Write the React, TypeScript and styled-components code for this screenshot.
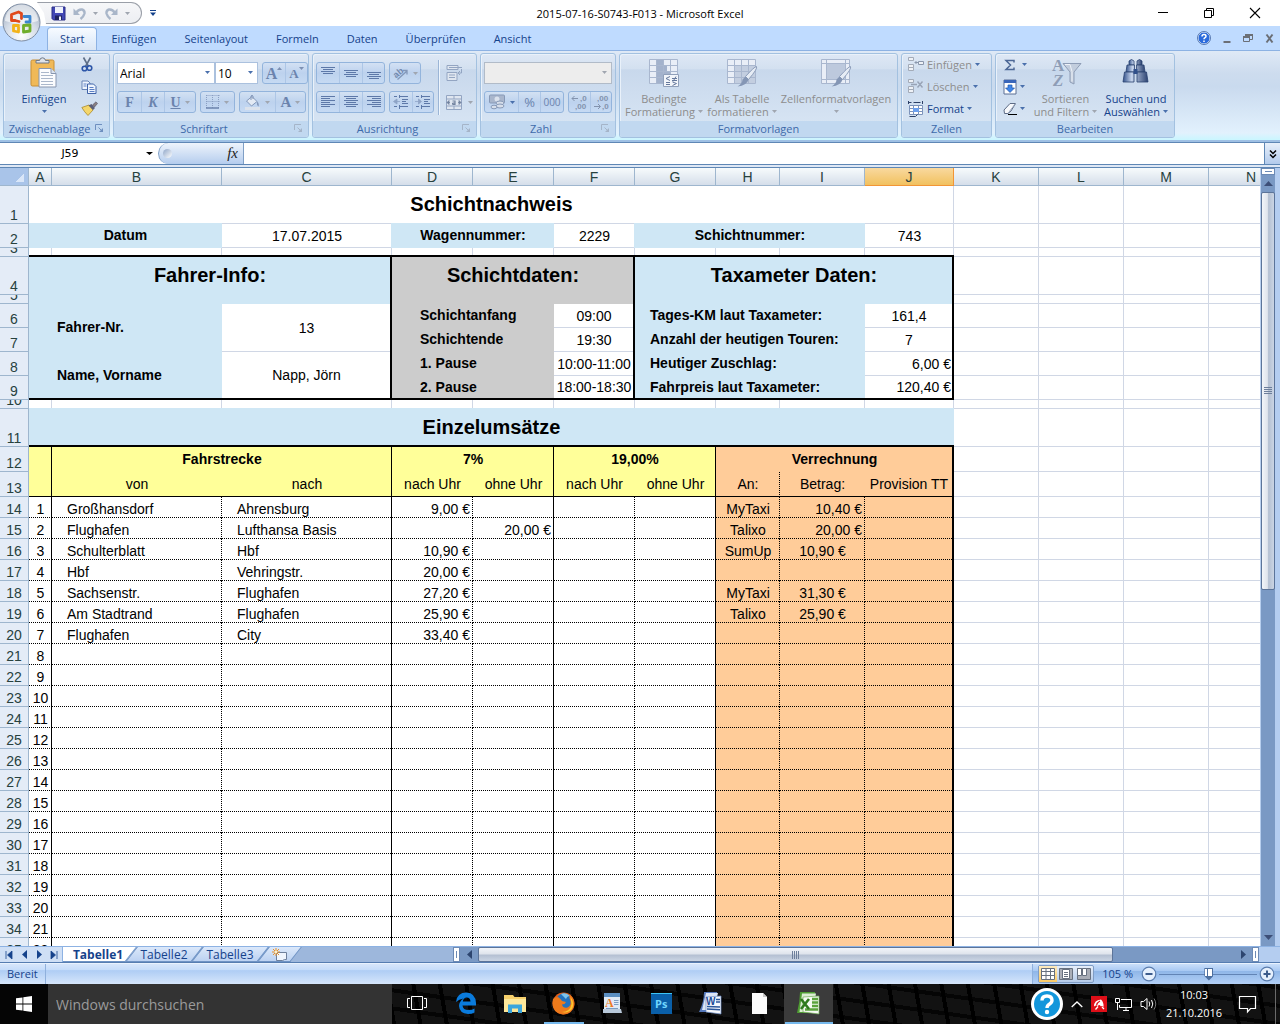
import React from "react";
import styled, { createGlobalStyle } from "styled-components";

const UI = `"Open Sans", "Noto Sans", sans-serif`;
const SHEET = `"Liberation Sans", Arial, sans-serif`;
const GRID = "#d0d7e5";
const HEAD = "#9eb6ce";
const BLUE = "#cfe7f5";
const GREY = "#cccccc";
const YELLOW = "#ffff99";
const ORANGE = "#ffcc99";
type Rule = "thick" | "thin" | "dots";

const Global = createGlobalStyle`
  *, *::before, *::after { box-sizing: border-box; }
  body { margin: 0; background: #fff; }
  button, input, select { font: inherit; color: inherit; margin: 0; padding: 0; border: 0; background: none; border-radius: 0; outline: none; }
  button { cursor: default; }
  svg { display: block; flex: none; overflow: visible; }
`;

const Page = styled.div`
  display: flex;
  flex-direction: column;
  height: 100vh;
  min-height: 480px;
  overflow: hidden;
  font-family: ${UI};
  font-size: 11px;
  line-height: 13px;
  color: #15428b;
`;

/* ---------- title bar and tabs ---------- */
const TopArea = styled.header`
  position: relative;
  flex: none;
`;
const TitleBar = styled.div`
  display: grid;
  grid-template-columns: 1fr auto 1fr;
  align-items: center;
  height: 26px;
  background: #fff;
`;
const Orb = styled.button`
  position: absolute;
  left: 2px;
  top: 3px;
`;
const QuickAccess = styled.div`
  display: flex;
  align-items: center;
  height: 26px;
  padding-left: 37px;
  gap: 8px;
`;
const QuickPill = styled.div`
  display: flex;
  align-items: center;
  gap: 7px;
  height: 22px;
  width: 105px;
  padding-left: 14px;
  border: 1px solid #9a9fa8;
  border-left: 0;
  border-radius: 0 11px 11px 0;
  background: linear-gradient(#f6f7f9, #eceef2);
  clip-path: polygon(0 0, 100% 0, 100% 100%, 9px 100%, 7px 50%);
`;
const WindowTitle = styled.div`
  font-size: 11px;
  color: #000;
`;
const WindowButtons = styled.div`
  display: flex;
  justify-content: flex-end;
  padding-right: 2px;
`;
const WindowButton = styled.button`
  display: flex;
  align-items: center;
  justify-content: center;
  width: 46px;
  height: 26px;
`;
const TabBar = styled.nav`
  display: flex;
  align-items: flex-end;
  height: 24px;
  padding: 0 6px 0 47px;
  background: #bfdbff;
`;
const RibbonTab = styled.button<{ $active?: boolean }>`
  height: 23px;
  padding: 0 ${(p) => (p.$active ? 12 : 14)}px 2px;
  border: 1px solid ${(p) => (p.$active ? "#8db2e3" : "transparent")};
  border-width: 1px ${(p) => (p.$active ? 1 : 0)}px 0;
  border-radius: 4px 4px 0 0;
  background: ${(p) => (p.$active ? "linear-gradient(#f7fbff, #e3eefb 60%, #dbe6f4)" : "none")};
`;
const TabTools = styled.div`
  display: flex;
  align-items: center;
  gap: 12px;
  height: 24px;
  margin-left: auto;
`;
const IconButton = styled.button`
  display: flex;
  align-items: center;
  justify-content: center;
`;

/* ---------- ribbon ---------- */
const Ribbon = styled.div`
  display: flex;
  gap: 3px;
  height: 92px;
  flex: none;
  padding: 2px 3px 4px;
  border-top: 1px solid #8db2e3;
  border-bottom: 2px solid #9fc0e4;
  background: linear-gradient(#dfe9f6, #cddcee 25%, #c9daee 40%, #e2f1fd 92%, #c9f6ff);
`;
const Group = styled.section<{ $w: number }>`
  display: flex;
  flex-direction: column;
  width: ${(p) => p.$w}px;
  flex: none;
  height: 85px;
  border: 1px solid #a3c1e0;
  border-radius: 3px;
  overflow: hidden;
  background: linear-gradient(#dee8f5, #d3e0f0 18%, #c8d8ec 19%, #dae7f5);
  box-shadow: inset 1px 1px 0 #e9f1fa;
`;
const GroupBody = styled.div`
  display: flex;
  flex: 1;
  padding: 0 3px;
`;
const GroupName = styled.div`
  display: flex;
  align-items: center;
  justify-content: center;
  height: 16px;
  padding-bottom: 1px;
  background: #c1d8f0;
  color: #3e6aaa;
`;
const GroupLabel = styled.span`
  flex: 1;
  text-align: center;
  white-space: nowrap;
`;
const Launcher = styled.button`
  width: 14px;
`;
const Rows = styled.div`
  display: flex;
  flex-direction: column;
  gap: 7px;
  padding-top: 8px;
`;
const Row = styled.div<{ $gap?: number }>`
  display: flex;
  gap: ${(p) => p.$gap ?? 4}px;
  height: 22px;
`;
const ButtonSet = styled.div`
  display: flex;
  border: 1px solid #93b4dc;
  border-radius: 3px;
  background: linear-gradient(#d3e1f3, #bdd2ee 50%, #c6daf3);
`;
const SetButton = styled.button<{ $w: number; $size?: number }>`
  display: flex;
  align-items: center;
  justify-content: center;
  gap: 4px;
  width: ${(p) => p.$w}px;
  color: #6b83ad;
  font-size: ${(p) => p.$size ?? 11}px;
  & + & {
    border-left: 1px solid #adc6e6;
  }
`;
const SizeMark = styled.span`
  align-self: flex-start;
  margin-left: -4px;
  padding-top: 4px;
`;
const Glyph = styled.span<{ $size: number; $italic?: boolean; $underline?: boolean }>`
  font-family: "Liberation Serif", serif;
  font-weight: bold;
  font-size: ${(p) => p.$size}px;
  font-style: ${(p) => (p.$italic ? "italic" : "normal")};
  text-decoration: ${(p) => (p.$underline ? "underline" : "none")};
`;
const Combo = styled.label<{ $w: number; $off?: boolean }>`
  position: relative;
  display: flex;
  align-items: center;
  width: ${(p) => p.$w}px;
  border: 1px solid ${(p) => (p.$off ? "#b1bbc8" : "#abc1de")};
  background: ${(p) => (p.$off ? "#ededed" : "#fff")};
  color: #000;
`;
const ComboSelect = styled.select`
  appearance: none;
  width: 100%;
  height: 100%;
  padding-left: 2px;
  font-size: 12px;
`;
const ComboArrow = styled.span`
  position: absolute;
  right: 4px;
  top: 8px;
  pointer-events: none;
`;
const Divider = styled.span`
  width: 2px;
  height: 55px;
  margin: 6px 6px 0 4px;
  border-left: 1px solid #9bb5d6;
  border-right: 1px solid #eef5fd;
`;
const PlainButton = styled.button`
  display: flex;
  align-items: center;
  gap: 6px;
  height: 22px;
`;
const BigButton = styled.button<{ $w: number; $off?: boolean }>`
  display: flex;
  flex-direction: column;
  align-items: center;
  width: ${(p) => p.$w}px;
  padding-top: 3px;
  color: ${(p) => (p.$off ? "#8d8d8d" : "#15428b")};
  white-space: nowrap;
`;
const BigCaption = styled.span`
  display: flex;
  align-items: center;
  gap: 3px;
  height: 13px;
`;
const BigIcon = styled.span`
  height: 35px;
`;
const Stack = styled.div<{ $left?: number }>`
  display: flex;
  flex-direction: column;
  padding-left: ${(p) => p.$left ?? 0}px;
`;
const SmallButton = styled.button<{ $off?: boolean }>`
  display: flex;
  align-items: center;
  gap: 3px;
  height: 22px;
  padding-bottom: 1px;
  color: ${(p) => (p.$off ? "#8d8d8d" : "#15428b")};
`;

/* ---------- formula bar ---------- */
const FormulaBar = styled.div`
  display: flex;
  flex: none;
  height: 23px;
  border-top: 1px solid #5f87b5;
  border-bottom: 1px solid #5f87b5;
  background: #fff;
  color: #000;
`;
const NameField = styled.input`
  width: 140px;
  text-align: center;
  font-family: "DejaVu Sans", sans-serif;
  font-size: 11px;
`;
const NameArrow = styled(IconButton)`
  width: 18px;
`;
const FormulaTools = styled.div`
  display: flex;
  align-items: center;
  justify-content: space-between;
  width: 86px;
  padding: 0 5px 0 4px;
  border: 1px solid #7f9fc6;
  border-width: 0 1px 0 1px;
  border-radius: 12px 0 0 12px;
  background: linear-gradient(#eef4fc, #b5cdee);
`;
const Knob = styled.span`
  width: 9px;
  height: 9px;
  border-radius: 50%;
  background: linear-gradient(135deg, #8fa6c8, #fff);
`;
const FxButton = styled.button`
  font: italic 15px "Liberation Serif", serif;
  color: #222;
`;
const FormulaField = styled.input`
  flex: 1;
  min-width: 0;
`;
const ExpandButton = styled(IconButton)`
  width: 16px;
  border-left: 1px solid #5f87b5;
  background: linear-gradient(#e8f0fb, #b3cbec);
`;
const Strip = styled.div`
  flex: none;
  height: 3px;
  background: #dfe8f5;
  border-bottom: 1px solid #5f87b5;
`;

/* ---------- sheet ---------- */
const SheetArea = styled.main`
  display: flex;
  flex: 1;
  min-height: 0;
`;
const Viewport = styled.div`
  flex: 1;
  min-width: 0;
  overflow: hidden;
  background: #fff;
`;
const Sheet = styled.table`
  width: 1294px;
  table-layout: fixed;
  border-collapse: separate;
  border-spacing: 0;
  font-family: ${SHEET};
  font-size: 14px;
  line-height: 16px;
  color: #000;
`;
const Line = styled.tr<{ $h: number }>`
  height: ${(p) => p.$h}px;
`;
const ColHead = styled.th<{ $on?: boolean }>`
  padding: 0;
  font-weight: normal;
  line-height: 16px;
  color: #27413e;
  border-right: 1px solid ${(p) => (p.$on ? "#f29536" : HEAD)};
  border-bottom: 1px solid ${(p) => (p.$on ? "#f29536" : HEAD)};
  background: ${(p) => (p.$on ? "linear-gradient(#f9d99f, #f1c15f)" : "linear-gradient(#f7fbfc, #d5deea)")};
`;
const Corner = styled.th`
  padding: 0;
  border-right: 1px solid ${HEAD};
  border-bottom: 1px solid ${HEAD};
  background: linear-gradient(135deg, transparent 50%, #d9e6f8 50%) right 4px bottom 3px / 9px 9px no-repeat #a9c4e9;
`;
const RowHead = styled.th`
  padding: 0;
  font-weight: normal;
  color: #27413e;
  vertical-align: bottom;
  border-right: 1px solid ${HEAD};
  border-bottom: 1px solid ${HEAD};
  background: #e4ecf7;
`;
const RowNumber = styled.div<{ $h: number }>`
  display: flex;
  align-items: flex-end;
  justify-content: center;
  height: ${(p) => p.$h}px;
  overflow: hidden;
`;
type CellProps = {
  $bg?: string;
  $right?: Rule;
  $bottom?: Rule;
  $align?: string;
  $v?: string;
  $indent?: number;
  $bold?: boolean;
  $title?: boolean;
  $cover?: "top" | "corner";
};
const paint = (rule: Rule | undefined, dir: string, bg?: string) =>
  rule === "dots"
    ? `repeating-linear-gradient(${dir}, #000 0 1px, transparent 1px 2px)`
    : rule
      ? "linear-gradient(#000, #000)"
      : `linear-gradient(${bg ?? GRID}, ${bg ?? GRID})`;
const weight = (rule?: Rule) => (rule === "thick" ? 2 : 1);
const cellBackground = ({ $bg, $right, $bottom }: CellProps) => {
  const right = `${paint($right, "180deg", $bg)} right top / ${weight($right)}px 100% no-repeat`;
  const bottom = `${paint($bottom, "90deg", $bg)} left bottom / 100% ${weight($bottom)}px no-repeat`;
  const rightFirst = $right === "thick" || $right === "thin";
  return `${rightFirst ? right : bottom}, ${rightFirst ? bottom : right}, ${$bg ?? "#fff"}`;
};
const Cell = styled.td<CellProps>`
  padding: 0 ${(p) => (p.$right === "thick" ? 3 : p.$align === "right" ? 3 : 2)}px
    ${(p) => weight(p.$bottom) + ((p.$bold || p.$title) && !p.$bottom ? 1 : 0)}px ${(p) => p.$indent ?? 2}px;
  white-space: nowrap;
  overflow: hidden;
  text-align: ${(p) => p.$align ?? "center"};
  vertical-align: ${(p) => p.$v ?? "middle"};
  font-weight: ${(p) => (p.$bold || p.$title ? "bold" : "normal")};
  font-size: ${(p) => (p.$title ? 20 : 14)}px;
  line-height: ${(p) => (p.$title ? 24 : 16)}px;
  background: ${cellBackground};
  box-shadow: ${(p) =>
    p.$cover === "top"
      ? `0 -1px 0 ${p.$bg}`
      : p.$cover === "corner"
        ? `0 -1px 0 ${p.$bg}, -1px 0 0 ${p.$bg}, -1px -1px 0 ${p.$bg}`
        : "none"};
`;

const VScroll = styled.div`
  display: flex;
  flex-direction: column;
  align-items: center;
  flex: none;
  width: 15px;
  background: #7a99c4;
  border-left: 1px solid #b8cfee;
`;
const SplitTop = styled.div`
  width: 14px;
  height: 7px;
  border: 1px solid #6c8ab5;
  background: linear-gradient(#6c8ab5, #6c8ab5) center / 7px 1px no-repeat #fff;
`;
const ScrollButton = styled(IconButton)`
  width: 14px;
  height: 17px;
  flex: none;
`;
const VTrack = styled.div`
  flex: 1;
  width: 14px;
`;
const VThumb = styled.div`
  display: flex;
  align-items: center;
  justify-content: center;
  width: 14px;
  height: 54%;
  border: 1px solid #5c7499;
  border-radius: 2px;
  background: linear-gradient(90deg, #f2f5f9, #dfe4ec 45%, #b4c0d2 55%, #cbd5e4);
`;
const Edge = styled.div`
  flex: none;
  width: 5px;
  background: #b4cdf0;
`;

/* ---------- sheet tabs ---------- */
const BottomBar = styled.div`
  display: flex;
  flex: none;
  height: 17px;
  border-top: 1px solid #8db2e3;
  border-bottom: 1px solid #567db1;
  background: #9db7dc;
`;
const NavSet = styled.div`
  position: relative;
  z-index: 1;
  display: flex;
  align-items: center;
  width: 63px;
  border-right: 1px solid #8db2e3;
  background: #cfdff5;
`;
const NavButton = styled(IconButton)`
  width: 15px;
  height: 15px;
  &:first-child {
    width: 17px;
  }
`;
const SheetTabs = styled.div`
  display: flex;
  flex: 388 1 0;
  padding-left: 2px;
`;
const SheetTab = styled.button<{ $active?: boolean; $w: number }>`
  position: relative;
  z-index: 0;
  display: flex;
  align-items: center;
  justify-content: center;
  width: ${(p) => p.$w}px;
  height: 15px;
  font-size: 12px;
  font-weight: ${(p) => (p.$active ? "bold" : "normal")};
  &::before {
    content: "";
    position: absolute;
    z-index: -1;
    inset: 0 0 0 ${(p) => (p.$active ? -10 : 0)}px;
    transform: skewX(-38deg);
    border: 1px solid #6f93c4;
    border-top: 0;
    background: ${(p) => (p.$active ? "#fff" : "linear-gradient(#dbe8fa, #bcd2f2)")};
  }
`;
const HScroll = styled.div`
  display: flex;
  flex: 805 1 0;
  background: #7a99c4;
`;
const SplitSide = styled.div`
  width: 7px;
  border: 1px solid #6c8ab5;
  background: linear-gradient(#6c8ab5, #6c8ab5) center / 1px 7px no-repeat #fff;
`;
const HButton = styled(IconButton)`
  width: 18px;
`;
const HTrack = styled.div`
  flex: 1;
`;
const HThumb = styled.div`
  display: flex;
  align-items: center;
  justify-content: center;
  width: 84%;
  height: 15px;
  border: 1px solid #5c7499;
  border-radius: 2px;
  background: linear-gradient(#f2f5f9, #dfe4ec 45%, #b4c0d2 55%, #cbd5e4);
`;
const BottomEnd = styled.div`
  width: 21px;
  background: #b4cdf0;
`;

/* ---------- status bar ---------- */
const StatusBar = styled.footer`
  display: flex;
  flex: none;
  height: 21px;
  border-top: 1px solid #e9f2fe;
  background: linear-gradient(#d7e6fb, #c5dcfa 30%, #afcdf5 33%, #d6e6fb);
`;
const StatusText = styled.div`
  width: 46px;
  padding: 3px 0 0 7px;
  border-right: 1px solid #8fb0dc;
`;
const StatusTools = styled.div`
  display: flex;
  align-items: center;
  gap: 8px;
  margin-left: auto;
  padding: 0 5px;
  border-left: 1px solid #8fb0dc;
  background: linear-gradient(#cadffa, #a9c9f3 33%, #8fb6e8 36%, #b3d0f6);
`;
const ViewSet = styled.div`
  display: flex;
  border: 1px solid #7f9cc4;
  border-radius: 2px;
  background: linear-gradient(#e6eefa, #b5cbe9);
`;
const ViewButton = styled(IconButton)<{ $on?: boolean }>`
  width: 18px;
  height: 16px;
  background: ${(p) => (p.$on ? "linear-gradient(#fdebc0, #fbc964)" : "none")};
`;
const ZoomLevel = styled.span`
  height: 15px;
`;
const ZoomSet = styled.div`
  display: flex;
  align-items: center;
  gap: 2px;
`;
const Zoom = styled.input`
  appearance: none;
  width: 98px;
  height: 16px;
  background: linear-gradient(#6284b5, #6284b5) center / 100% 1px no-repeat;
  &::-webkit-slider-thumb {
    appearance: none;
    width: 9px;
    height: 13px;
    background: linear-gradient(90deg, #fff 2px, #4d6f9f 2px 3px, #fff 3px) center 1px / 7px 7px no-repeat #4d6f9f;
    clip-path: polygon(0 0, 100% 0, 100% 65%, 50% 100%, 0 65%);
  }
`;

/* ---------- taskbar ---------- */
const Taskbar = styled.footer`
  display: flex;
  flex: none;
  height: 40px;
  color: #fff;
  background: repeating-linear-gradient(80deg, transparent 0 22px, #000 22px 26px),
    repeating-linear-gradient(8deg, #121212 0 14px, #050505 14px 18px);
`;
const StartButton = styled(IconButton)`
  width: 48px;
  background: #050505;
`;
const Search = styled.input`
  width: 344px;
  padding-left: 8px;
  background: #333;
  font-size: 14px;
  &::placeholder {
    color: #9b9b9b;
    opacity: 1;
  }
`;
const TaskButton = styled(IconButton)<{ $open?: boolean; $front?: boolean }>`
  width: 49px;
  border-bottom: 2px solid transparent;
  background: ${(p) => (p.$front ? "linear-gradient(#76b9ed, #76b9ed) bottom / 48px 2px no-repeat border-box, #3b3b3b" : p.$open ? "linear-gradient(#76b9ed, #76b9ed) bottom / 40px 2px no-repeat border-box" : "none")};
`;
const Tray = styled.div`
  display: flex;
  align-items: center;
  gap: 8px;
  margin-left: auto;
`;
const Clock = styled.div`
  width: 66px;
  padding-right: 8px;
  text-align: center;
  font-size: 11px;
  line-height: 18px;
  white-space: nowrap;
`;
const ShowDesktop = styled.button`
  width: 5px;
  height: 40px;
  margin-left: 11px;
  border-left: 1px solid #6a6a6a;
`;

/* ---------- drawings ---------- */
const Arrow = ({ c = "#4a70ac", w = 5 }: { c?: string; w?: number }) => (
  <svg width={w} height={3} viewBox="0 0 6 3" preserveAspectRatio="none">
    <path d="M0 0h6L3 3z" fill={c} />
  </svg>
);
const Mark = ({ up }: { up?: boolean }) => (
  <svg width={5} height={3} viewBox="0 0 5 3">
    <path d={up ? "M0 3h5L2.500 0z" : "M0 0h5L2.500 3z"} fill="#7d90b3" />
  </svg>
);
const SideArrow = ({ left, c = "#2d456f" }: { left?: boolean; c?: string }) => (
  <svg width="5" height="9" viewBox="0 0 5 9">
    <path d={left ? "M5 0v9L0 4.500z" : "M0 0v9l5-4.500z"} fill={c} />
  </svg>
);
const OrbIcon = () => (
  <svg width="39" height="39" viewBox="0 0 39 39">
    <defs>
      <radialGradient id="orb" cx=".5" cy=".85" r=".9">
        <stop offset="0" stopColor="#fff" />
        <stop offset=".5" stopColor="#d3dbe6" />
        <stop offset="1" stopColor="#8e9db3" />
      </radialGradient>
    </defs>
    <circle cx="19.500" cy="19.500" r="18.500" fill="url(#orb)" stroke="#7e8da3" />
    <path d="M3 18a16.500 16.500 0 0 1 33 0q-16 5-33 0z" fill="#fff" opacity=".6" />
    <g fill="none" strokeWidth="2.800" strokeLinejoin="round" strokeLinecap="round">
      <path d="M13 17.500h-3.500V11.500l7-2.500 3 1.500v5M13 17.500l4 1" stroke="#e0481b" />
      <path d="M22 13.500h6v5.500h-4" stroke="#3a86d0" />
      <path d="M16.500 22.500h-5v5.500l5 1v-5" stroke="#f2b319" />
      <path d="M21.500 22.500l6.500-.5v6l-6.500 1z" stroke="#6fae2c" />
    </g>
  </svg>
);
const SaveIcon = () => (
  <svg width="15" height="15" viewBox="0 0 15 15">
    <path d="M1 1h13v13H2.500L1 12.500z" fill="#4247b5" stroke="#2b2f86" />
    <path d="M4 1h8v6H4z" fill="#eef1fb" />
    <path d="M4 9.500h7V14H4z" fill="#20245f" />
    <path d="M8 10.500h2V14H8z" fill="#eef1fb" />
  </svg>
);
const TurnIcon = ({ flip }: { flip?: boolean }) => (
  <svg width="13" height="13" viewBox="0 0 13 13">
    <g transform={flip ? "matrix(-1 0 0 1 13 0)" : undefined}>
      <path d="M3 6q2.500-4 6-3.500 3 .8 2.500 4-.8 3-4 5.500" fill="none" stroke="#a9b6c9" strokeWidth="2.400" />
      <path d="M.5 1.500v6.500H7z" fill="#a9b6c9" />
    </g>
  </svg>
);
const MoreIcon = () => (
  <svg width="6" height="6" viewBox="0 0 6 6">
    <path d="M0 0h6v1H0zM0 2.500h6L3 6z" fill="#15428b" />
  </svg>
);
const MinIcon = () => (
  <svg width="10" height="10" viewBox="0 0 10 10">
    <path d="M0 4.500h10" stroke="#000" />
  </svg>
);
const RestoreIcon = () => (
  <svg width="10" height="10" viewBox="0 0 10 10">
    <path d="M.5 2.500h7v7h-7zM2.500 2.500v-2h7v7h-2" fill="none" stroke="#000" />
  </svg>
);
const CloseIcon = () => (
  <svg width="10" height="10" viewBox="0 0 10 10">
    <path d="M0 0l10 10M10 0L0 10" stroke="#000" strokeWidth="1.100" />
  </svg>
);
const HelpIcon = () => (
  <svg width="14" height="14" viewBox="0 0 14 14">
    <circle cx="7" cy="7" r="6" fill="#2b6bdc" stroke="#dbe7fa" />
    <circle cx="7" cy="7" r="6.500" fill="none" stroke="#3a5f9e" strokeWidth=".8" />
    <path d="M5 5.500q0-2 2-2t2 1.700q0 1-1.200 1.600-.8.500-.8 1.400M7 9.500v1.500" fill="none" stroke="#fff" strokeWidth="1.500" />
  </svg>
);
const InnerMin = () => (
  <svg width="8" height="9" viewBox="0 0 8 9">
    <path d="M.5 8h7" stroke="#6b6f76" strokeWidth="2" />
  </svg>
);
const InnerRestore = () => (
  <svg width="10" height="9" viewBox="0 0 10 9">
    <path d="M.5 3.500h6v4h-6zM2.500 3V1.500h7v4H7" fill="none" stroke="#6b6f76" />
    <path d="M0 3h7M2 1h8" stroke="#6b6f76" strokeWidth="2" />
  </svg>
);
const InnerClose = () => (
  <svg width="9" height="9" viewBox="0 0 9 9">
    <path d="M1.500.5l6 8M7.500.5l-6 8" stroke="#6b6f76" strokeWidth="2" />
  </svg>
);
const PasteIcon = () => (
  <svg width="28" height="32" viewBox="0 0 28 32">
    <rect x="1" y="3" width="23" height="26" rx="1.500" fill="#f0b958" stroke="#c98f35" />
    <path d="M6 6V3.500h3.500Q10 .8 12.500.8t3 2.700H19V6z" fill="#dfe3ea" stroke="#6f7988" />
    <path d="M9 11.500h12l5 5V30H9z" fill="#fbfcfe" stroke="#8796b0" />
    <path d="M21 11.500v5h5" fill="#dbe3ef" stroke="#8796b0" />
    <path d="M11 15.500h8M11 18.500h12M11 21.500h12M11 24.500h12M11 27.500h12" stroke="#aab7cb" />
  </svg>
);
const CutIcon = () => (
  <svg width="12" height="15" viewBox="0 0 12 15">
    <path d="M2.500.5l5 9M9.500.5l-5 9" stroke="#5f6f88" strokeWidth="1.600" />
    <circle cx="3.500" cy="11.500" r="2.300" fill="none" stroke="#2d56a8" strokeWidth="1.600" />
    <circle cx="8.500" cy="11" r="2.300" fill="none" stroke="#2d56a8" strokeWidth="1.600" />
  </svg>
);
const CopyIcon = () => (
  <svg width="16" height="14" viewBox="0 0 16 14">
    <path d="M1 1h6l2 2v6.500H1z" fill="#eef4fd" stroke="#6683b7" />
    <path d="M6.500 4h6l2.500 2.500v7H6.500z" fill="#eef4fd" stroke="#3f63a8" />
    <path d="M2.500 4h3M2.500 6h3M8.500 7.500h4M8.500 9.500h5M8.500 11.500h5" stroke="#5b7fc4" />
  </svg>
);
const BrushIcon = () => (
  <svg width="17" height="15" viewBox="0 0 17 15">
    <path d="M.8 6.500L8 4l4 5-5 5.500Q3.500 11 .8 6.500z" fill="#f4d66b" stroke="#a98a2c" strokeWidth=".8" />
    <path d="M7.500 4.500l3-1.500 3.500 4-2 2z" fill="#5c5f78" />
    <path d="M11.500 4L15 .8l1.500 1.700-3 3.500z" fill="#8a7f80" stroke="#4e4e63" strokeWidth=".6" />
  </svg>
);
const LaunchIcon = ({ c = "#6e8fbf" }: { c?: string }) => (
  <svg width="9" height="9" viewBox="0 0 9 9">
    <path d="M.5 6V.5H7" fill="none" stroke={c} />
    <path d="M3.500 3.500l3 3" stroke={c} />
    <path d="M8 4v4H4z" fill={c} />
  </svg>
);
const BorderIcon = () => (
  <svg width="14" height="14" viewBox="0 0 14 14">
    <path d="M.5.5h13M.5 6.500h13M.5 0v13M6.500 0v13M12.500 0v13" stroke="#8b9fc2" strokeDasharray="1 1" />
    <path d="M0 13h13" stroke="#6b83ad" strokeWidth="1.500" />
  </svg>
);
const FillIcon = () => (
  <svg width="16" height="15" viewBox="0 0 16 15">
    <path d="M1.500 6L7 1.500l5 5L6.500 11z" fill="#e3eaf4" stroke="#8297b9" />
    <path d="M6 5V1q1-1.500 2 0v3" fill="none" stroke="#8297b9" />
    <path d="M12 6.500q2.500 2 1.500 5-2-1-1.500-5z" fill="#8297b9" />
    <path d="M0 12h15v3H0z" fill="#dbe2ec" />
  </svg>
);
const LinesIcon = ({ rows, c = "#5d78a8" }: { rows: [number, number, number][]; c?: string }) => (
  <svg width="14" height="14" viewBox="0 0 14 14">
    {rows.map(([y, x1, x2], i) => (
      <path key={i} d={`M${x1} ${y + 0.5}H${x2}`} stroke={c} />
    ))}
  </svg>
);
const RotateIcon = () => (
  <svg width="16" height="14" viewBox="0 0 16 14">
    <path d="M4.500 13.500L14 5M14 8.500V4.500h-4" fill="none" stroke="#8297b9" strokeWidth="1.300" />
    <text x="0" y="10" fontFamily="Liberation Sans" fontWeight="bold" fontSize="9" fill="#7389ae" transform="rotate(-40 5 7)">ab</text>
  </svg>
);
const IndentIcon = ({ right }: { right?: boolean }) => (
  <svg width="16" height="14" viewBox="0 0 16 14">
    <path d="M1 1.500h3M6 1.500h9M9 4.500h6M9 6.500h4M9 8.500h6M1 11.500h3M6 11.500h9M6.500 0v3M6.500 10v4" stroke="#5d78a8" />
    <path d={right ? "M0 6.500h4M3.500 4v5l3-2.500z" : "M3 6.500h4M4 4v5L.5 6.500z"} stroke="#8ea3c6" fill="#8ea3c6" strokeWidth=".8" />
  </svg>
);
const WrapIcon = () => (
  <svg width="17" height="16" viewBox="0 0 17 16">
    <path d="M1 .5h11v4H1zM1 7.500h10v8H1z" fill="#dfe6f0" stroke="#93a5c2" />
    <path d="M3 2.500h13M3 10h6M3 12.500h6" stroke="#93a5c2" />
    <path d="M15.500 4v4h-3M14 6l-2 2 2 2" fill="none" stroke="#93a5c2" />
  </svg>
);
const MergeIcon = () => (
  <svg width="16" height="15" viewBox="0 0 16 15">
    <path d="M.5.5h15v14H.5zM.5 4h15M.5 11h15M8 .5V4M8 11v3.500" fill="#dfe6f0" stroke="#93a5c2" />
    <path d="M1 7.500h3M12 7.500h3M3 5.500v4l-2-2zM13 5.500v4l2-2z" stroke="#72839f" fill="#72839f" strokeWidth=".8" />
    <path d="M6.500 6h2.500v3.500H7q-1.500-1.700 2-1.700" fill="none" stroke="#72839f" strokeWidth="1.200" />
  </svg>
);
const MoneyIcon = () => (
  <svg width="17" height="16" viewBox="0 0 17 16">
    <rect x=".5" y="1" width="15" height="8" rx="1" fill="#a9b6cc" stroke="#8799b7" />
    <circle cx="8" cy="5" r="2.500" fill="#dbe2ed" />
    <ellipse cx="11" cy="9" rx="4" ry="2" fill="#d7deea" stroke="#8799b7" />
    <ellipse cx="11" cy="12" rx="4" ry="2" fill="#d7deea" stroke="#8799b7" />
    <ellipse cx="5" cy="13" rx="3" ry="1.800" fill="#d7deea" stroke="#8799b7" />
  </svg>
);
const DecimalIcon = ({ less }: { less?: boolean }) => (
  <svg width="17" height="16" viewBox="0 0 17 16">
    <g fontFamily="Liberation Sans" fontWeight="bold" fontSize="8" fill="#8393ae">
      <text x={less ? 4 : 9} y="7">{less ? ",00" : ",0"}</text>
      <text x={less ? 9 : 4} y="15">{less ? ",0" : ",00"}</text>
    </g>
    <path d={less ? "M1 12.500h6M5 10l2.500 2.500L5 15" : "M1 4.500h6M3.500 2L1 4.500 3.500 7"} stroke="#8393ae" fill="none" />
  </svg>
);
const TableIcon = ({ kind }: { kind: "cond" | "table" | "cell" }) => (
  <svg width="32" height="32" viewBox="0 0 32 32">
    <path d="M1.500 2.500h28v24h-28z" fill="#e9eef7" />
    {kind === "cond" && <path d="M8 2.500h7v6h4v6h4v6h-8v6H8z" fill="#a3b2cc" />}
    {kind === "table" && <path d="M9 9h20v17H9z" fill="#c3cee0" />}
    <path
      d={kind === "cell" ? "M1.500 2.500h28v24h-28zM1.500 6.500h28M1.500 22.500h28M6.500 2.500v24M25.500 2.500v24" : "M1.500 2.500h28v24h-28zM1.500 8.500h28M1.500 14.500h28M1.500 20.500h28M8.500 2.500v24M15.500 2.500v24M22.500 2.500v24"}
      fill="none"
      stroke="#a9b7cf"
    />
    {kind === "cell" && <path d="M7 7h18v15H7z" fill="#bdc9dd" />}
    {kind === "cond" ? (
      <>
        <path d="M15.500 17.500h15v12h-15z" fill="#f2f5fa" stroke="#8f9fba" />
        <path d="M22 19.500l-4 2 4 2M18 25.500h4M18 27.500h4M24 21.500h5M24 23.500h5M28 19.500l-3 5M24.500 25l4 1.500-4 2" fill="none" stroke="#65789c" />
      </>
    ) : (
      <>
        <path d="M30.500 9.500q1.500 2-8 13l-3-3q9-10 11-10z" fill="#e6ecf5" stroke="#8c9dba" />
        <path d="M19.500 19.500l3 3q-1.500 6-11 7 5-3 5-7z" fill="#8496b5" />
      </>
    )}
  </svg>
);
const CellsIcon = ({ kind }: { kind: "insert" | "delete" | "format" }) =>
  kind === "format" ? (
    <svg width="16" height="16" viewBox="0 0 16 16">
      <path d="M.5 1.500h3M5.500 1.500h7M14.500 0v3M.5 0v3" stroke="#2c3f66" />
      <path d="M1.500 4.500h13v9h-13zM1.500 7.500h13M1.500 10.500h13M5.500 4.500v9M10.500 4.500v9" fill="#fff" stroke="#7c93bb" />
      <path d="M5 7h6v4H5z" fill="#6da0ee" />
      <path d="M1.500 15.500h6l2-2" fill="none" stroke="#2c3f66" />
    </svg>
  ) : (
    <svg width="16" height="15" viewBox="0 0 16 15">
      <path d="M.5.5h5v3h-5zM.5 7.500h5v3h-5zM.5 10.500h5v3h-5z" fill="#eef1f6" stroke="#a3abb8" />
      {kind === "insert" ? (
        <path d="M6.500 5.500H10M8 4v3M10.500 4.500h5v3h-5z" fill="#eef1f6" stroke="#8a97ac" />
      ) : (
        <path d="M3 5.500h6M9.500 2.500l5 6M14.500 2.500l-5 6" fill="none" stroke="#98a3b6" strokeWidth="1.400" />
      )}
    </svg>
  );
const SigmaIcon = () => (
  <svg width="16" height="12" viewBox="0 0 16 12">
    <path d="M11 3.500V1.500H3L7.500 6 3 10.500h8v-2" fill="none" stroke="#4d6896" strokeWidth="1.500" />
  </svg>
);
const FillDownIcon = () => (
  <svg width="14" height="16" viewBox="0 0 14 16">
    <path d="M1 1h12v14H1z" fill="#fff" stroke="#5a6f94" />
    <path d="M1 1h12v3H1z" fill="#3a66b9" />
    <path d="M5 6h4v3h2.500L7 13.500 2.500 9H5z" fill="#3f86ea" stroke="#1f56ab" strokeWidth=".7" />
  </svg>
);
const EraserIcon = () => (
  <svg width="14" height="13" viewBox="0 0 14 13">
    <path d="M1 8l6-6.500h5.500L8 9l-3 2.500H1.500z" fill="#f7f9fc" stroke="#5d6b85" />
    <path d="M5 11.500L7.500 8l5-6.500" fill="none" stroke="#9aa7bd" />
    <path d="M5 12.500h9" stroke="#000" />
  </svg>
);
const SortIcon = () => (
  <svg width="32" height="32" viewBox="0 0 32 32">
    <g fontFamily="Liberation Serif" fontWeight="bold" fontSize="17" fill="#8e9db6">
      <text x="2" y="14">A</text>
      <text x="3" y="29" fontStyle="italic">Z</text>
    </g>
    <path d="M13 6.500h18L24 15v12l-4-2V15z" fill="#c2cddd" stroke="#8e9db6" />
    <path d="M15 7.500h5l2 7v10" stroke="#eef2f8" fill="none" />
  </svg>
);
const FindIcon = () => (
  <svg width="30" height="30" viewBox="0 0 30 30">
    <defs>
      <linearGradient id="bino" x1="0" x2="1">
        <stop offset="0" stopColor="#31508a" />
        <stop offset=".35" stopColor="#c8d6ee" />
        <stop offset="1" stopColor="#2a4170" />
      </linearGradient>
    </defs>
    <g fill="url(#bino)" stroke="#2a4170" strokeWidth=".8">
      <path d="M8 4q2.500-3 5 0v4H8zM16 4q2.500-3 5 0v4h-5z" />
      <path d="M6 8h7.500v7H5zM15.500 8H23l1 7h-8.500z" />
      <path d="M3.500 15h9.500v10H2zM16 15h9.500L27 25H16z" />
    </g>
    <path d="M12.500 12h4v5h-4z" fill="#31508a" />
  </svg>
);
const ChevronsIcon = () => (
  <svg width="8" height="8" viewBox="0 0 8 8">
    <path d="M1 .5l3 3 3-3M1 4.500l3 3 3-3" fill="none" stroke="#000" strokeWidth="1.500" />
  </svg>
);
const UpDownIcon = ({ up }: { up?: boolean }) => (
  <svg width="9" height="5" viewBox="0 0 9 5">
    <path d={up ? "M0 5h9L4.500 0z" : "M0 0h9L4.500 5z"} fill="#3d4f78" />
  </svg>
);
const Grip = ({ vertical }: { vertical?: boolean }) => (
  <svg width="8" height="8" viewBox="0 0 8 8">
    <path d={vertical ? "M0 .5h8M0 2.500h8M0 4.500h8M0 6.500h8" : "M.5 0v8M2.500 0v8M4.500 0v8M6.500 0v8"} stroke="#6d7f9b" />
  </svg>
);
const EndArrow = ({ left }: { left?: boolean }) => (
  <svg width="7" height="8" viewBox="0 0 7 8">
    <path d={left ? "M1 0v8M7 0v8L2.500 4z" : "M6 0v8M0 0v8l4.500-4z"} fill="#15428b" stroke="#15428b" strokeWidth=".8" />
  </svg>
);
const NewSheetIcon = () => (
  <svg width="16" height="13" viewBox="0 0 16 13">
    <path d="M4.500 4.500h10v7h-2l-2 1h-6z" fill="#eef4fd" stroke="#6d7f9b" />
    <path d="M4 0v8M0 4h8M1 1l6 6M7 1L1 7" stroke="#e8912a" />
    <circle cx="4" cy="4" r="1.300" fill="#fff3c8" />
  </svg>
);
const ViewIcon = ({ kind }: { kind: number }) => (
  <svg width="14" height="12" viewBox="0 0 14 12">
    <path d="M.5.5h13v11H.5z" fill={kind === 0 ? "#fff" : "#a9adb6"} stroke="#67707f" />
    {kind === 0 && <path d="M.5 3.500h13M.5 7.500h13M5 .5v11M9.500.5v11" stroke="#67707f" />}
    {kind === 1 && <path d="M3.500 1.500h7v9h-7zM5 4.500h4M5 6.500h4M5 8.500h4" fill="#fff" stroke="#67707f" />}
    {kind === 2 && <path d="M.5.500h4v7h-4zM5.500.5h4v7h-4z" fill="#fff" stroke="#67707f" />}
  </svg>
);
const ZoomSign = ({ plus }: { plus?: boolean }) => (
  <svg width="16" height="16" viewBox="0 0 16 16">
    <circle cx="8" cy="8" r="6.800" fill="#e6f0fd" stroke="#5a7cad" strokeWidth="1.200" />
    <path d={plus ? "M4.500 8h7M8 4.500v7" : "M4.500 8h7"} stroke="#3d5c8c" strokeWidth="2" />
  </svg>
);
const WindowsIcon = () => (
  <svg width="16" height="16" viewBox="0 0 16 16">
    <path d="M0 2.300L6.500 1.400v6.200H0zM7.300 1.300L16 0v7.600H7.300zM0 8.400h6.500v6.200L0 13.700zM7.300 8.400H16V16l-8.700-1.300z" fill="#fff" />
  </svg>
);
const TaskViewIcon = () => (
  <svg width="20" height="14" viewBox="0 0 20 14">
    <path d="M4.500.5h11v13h-11zM3 2.500H.5v9H3M17 2.500h2.500v9H17" fill="none" stroke="#fff" />
  </svg>
);
const EdgeIcon = () => (
  <svg width="20" height="22" viewBox="0 0 20 22">
    <path d="M0 10Q1 .5 10.500.500 19.500 1 20 11v2.500H6.500q.5 4.500 6 4.500 3.500 0 6-1.500v4Q16 22 12 22 3.500 21.500 3 14q0-4.500 4.500-7.500Q3 7 0 10zM6.800 9.500h7.700q-.3-4-3.700-4-3.500.3-4 4z" fill="#0a7bdc" fillRule="evenodd" />
  </svg>
);
const FolderIcon = () => (
  <svg width="22" height="19" viewBox="0 0 22 19">
    <path d="M0 1h9l1.500 2H22v15H0z" fill="#f6d06c" />
    <path d="M0 5h22v13H0z" fill="#fde89b" />
    <path d="M4 19v-8.500h14V19h-4v-4.500H8V19z" fill="#3aa6dd" />
  </svg>
);
const FirefoxIcon = () => (
  <svg width="23" height="23" viewBox="0 0 23 23">
    <circle cx="11.500" cy="11.500" r="11" fill="#e2601a" />
    <circle cx="12" cy="9.500" r="8" fill="#2472bd" />
    <path d="M9 2q5-2 9 2-3 0-4 3z" fill="#7cc4ee" />
    <path d="M1 7q2-2 5-2 3 2 4 4l4 1q-1 2.500-4 2.500 1 4 5.500 3 3.500-1.500 3-6Q17 5 17.500 2.500 23 7 22.300 13 20 22 11 22.500.5 21 .5 11z" fill="#ee7a1b" />
    <path d="M18.500 5q4.500 6 1.500 12-4 4.500-10 3Q18 20 19.500 12z" fill="#fcc62f" />
  </svg>
);
const WordPadIcon = () => (
  <svg width="19" height="21" viewBox="0 0 19 21">
    <path d="M1 1h16v19H1z" fill="#dfeaf6" />
    <path d="M1 0h16v4H1z" fill="#5b8fc2" />
    <path d="M0 16h18l1 4H0z" fill="#b9c9da" />
    <path d="M11 7.500h4.500M11 9.500h4.500M11 11.500h4.500M3 15.500h12" stroke="#7a9cc2" />
    <text x="2" y="14" fontFamily="Liberation Serif" fontWeight="bold" fontSize="12" fill="#ee7a24">A</text>
  </svg>
);
const PsIcon = () => (
  <svg width="21" height="21" viewBox="0 0 21 21">
    <path d="M0 0h21v21H0z" fill="#0a5fa8" />
    <path d="M0 0h21v1H0z" fill="#3cc3f5" />
    <text x="4" y="15" fontFamily="Open Sans" fontWeight="bold" fontSize="11" fill="#6fd6ff">Ps</text>
  </svg>
);
const WordIcon = () => (
  <svg width="23" height="22" viewBox="0 0 23 22">
    <path d="M5 0h13v12L13 20H0Q5 10 5 0z" fill="#5578bb" />
    <path d="M7 1h12l-4 17H3z" fill="#dbe5f5" />
    <path d="M7 5l15-1v18L7 20z" fill="#f4f7fc" stroke="#6c8bc4" strokeWidth=".7" />
    <path d="M17 7.500h4M17 10h4M8 14.500l13 .5M8 17l13 .8" stroke="#2b579a" strokeWidth="1.500" />
    <text x="7" y="12.500" fontFamily="Liberation Sans" fontWeight="bold" fontSize="10" fill="#1f4b96">W</text>
  </svg>
);
const PageIcon = () => (
  <svg width="15" height="21" viewBox="0 0 15 21">
    <path d="M0 0h11l4 4v17H0z" fill="#fbfbfb" />
    <path d="M11 0v4h4z" fill="#c8c8c8" />
  </svg>
);
const ExcelIcon = () => (
  <svg width="23" height="22" viewBox="0 0 23 22">
    <path d="M3 0h15v12l-3 9H0Q3 10 3 0z" fill="#4f9d33" />
    <path d="M5 1.500h14L16 20H2.500z" fill="#dcedd3" />
    <path d="M6 5l16-1v18L6 20z" fill="#f5faf2" stroke="#71ad58" strokeWidth=".7" />
    <path d="M15 7h6M15 10.500h6M15 14h6M8 17.500h13" stroke="#5aa33c" strokeWidth="2.500" />
    <path d="M4 7l8 10M12 7L4 17" stroke="#2f7a1c" strokeWidth="2.600" />
  </svg>
);
const HelpRound = () => (
  <svg width="32" height="32" viewBox="0 0 32 32">
    <circle cx="16" cy="16" r="14.500" fill="#1296db" stroke="#fff" strokeWidth="3" />
    <path d="M11 12.500Q11 8 16 8t5 4.300q0 2.200-2.700 3.900Q16 17.500 16 20" fill="none" stroke="#fff" strokeWidth="3.400" />
    <circle cx="16" cy="24" r="2.200" fill="#fff" />
  </svg>
);
const ChevronUp = () => (
  <svg width="12" height="7" viewBox="0 0 12 7">
    <path d="M.7 6L6 1l5.300 5" fill="none" stroke="#fff" strokeWidth="1.300" />
  </svg>
);
const AviraIcon = () => (
  <svg width="16" height="16" viewBox="0 0 16 16">
    <path d="M0 0h16v16H0z" fill="#df0f18" />
    <path d="M3 10.500Q3 4 10 3.500q3 3 2.500 7.500-1.500-1.500-2.500-.5-2-2-3.500-.5-1.500-1-3.500.5z" fill="#fff" />
    <path d="M5.500 9.500Q6 6.500 9 5M9 9.500L5.500 13.500" fill="none" stroke="#df0f18" strokeWidth="1.200" />
    <path d="M7 10.500L4.500 13.500M11 11l2 2" stroke="#fff" strokeWidth="1.300" />
  </svg>
);
const NetIcon = () => (
  <svg width="17" height="15" viewBox="0 0 17 15">
    <path d="M6 2.500h10.500v8H4.500V8M8 13.500h6M11 10.500v3M.5 1.500h4v4h-4zM2.500 5.500V13" fill="none" stroke="#fff" />
  </svg>
);
const VolumeIcon = () => (
  <svg width="17" height="14" viewBox="0 0 17 14">
    <path d="M1 4.500h2.500L7 1.500v11L3.500 9.500H1z" fill="none" stroke="#fff" />
    <path d="M9 4.500q1.500 2.500 0 5M11.500 3q2.500 4 0 8" fill="none" stroke="#fff" />
    <path d="M14 1.500q3.500 5.500 0 11" fill="none" stroke="#777" />
  </svg>
);
const NoteIcon = () => (
  <svg width="17" height="17" viewBox="0 0 17 17">
    <path d="M.5.5h16v12h-5l-3 3.500v-3.500h-8z" fill="none" stroke="#fff" strokeWidth="1.200" />
  </svg>
);

/* ---------- content ---------- */
const columns: [string, number][] = [
  ["A", 23], ["B", 170], ["C", 170], ["D", 81], ["E", 81], ["F", 81], ["G", 81],
  ["H", 64], ["I", 85], ["J", 89], ["K", 85], ["L", 85], ["M", 85], ["N", 85],
];

type Trip = { von: string; nach: string; d?: string; e?: string; an?: string; betrag?: string; right?: boolean };
const trips: Trip[] = [
  { von: "Großhansdorf", nach: "Ahrensburg", d: "9,00 €", an: "MyTaxi", betrag: "10,40 €", right: true },
  { von: "Flughafen", nach: "Lufthansa Basis", e: "20,00 €", an: "Talixo", betrag: "20,00 €", right: true },
  { von: "Schulterblatt", nach: "Hbf", d: "10,90 €", an: "SumUp", betrag: "10,90 €" },
  { von: "Hbf", nach: "Vehringstr.", d: "20,00 €" },
  { von: "Sachsenstr.", nach: "Flughafen", d: "27,20 €", an: "MyTaxi", betrag: "31,30 €" },
  { von: "Am Stadtrand", nach: "Flughafen", d: "25,90 €", an: "Talixo", betrag: "25,90 €" },
  { von: "Flughafen", nach: "City", d: "33,40 €" },
];

const SheetRow = ({ n, h, children }: { n: number; h: number; children?: React.ReactNode }) => (
  <Line $h={h}>
    <RowHead scope="row">
      <RowNumber $h={h - 1}>{n}</RowNumber>
    </RowHead>
    {children}
    <Cell />
    <Cell />
    <Cell />
    <Cell />
  </Line>
);
const blanks = (n: number, bottom?: Rule) => Array.from({ length: n }, (_, i) => <Cell key={i} $bottom={bottom} />);

const Worksheet = () => (
  <Sheet>
    <colgroup>
      <col style={{ width: 29 }} />
      {columns.map(([name, width]) => (
        <col key={name} style={{ width }} />
      ))}
    </colgroup>
    <thead>
      <Line $h={18}>
        <Corner aria-label="Alles markieren" />
        {columns.map(([name]) => (
          <ColHead key={name} scope="col" $on={name === "J"}>
            {name}
          </ColHead>
        ))}
      </Line>
    </thead>
    <tbody>
      <SheetRow n={1} h={38}>
        <Cell colSpan={10} $title>Schichtnachweis</Cell>
      </SheetRow>
      <SheetRow n={2} h={24}>
        <Cell colSpan={2} $bg={BLUE} $bold $cover="top">Datum</Cell>
        <Cell>17.07.2015</Cell>
        <Cell colSpan={2} $bg={BLUE} $bold $cover="corner">Wagennummer:</Cell>
        <Cell>2229</Cell>
        <Cell colSpan={3} $bg={BLUE} $bold $cover="corner">Schichtnummer:</Cell>
        <Cell>743</Cell>
      </SheetRow>
      <SheetRow n={3} h={9}>{blanks(10, "thick")}</SheetRow>
      <SheetRow n={4} h={38}>
        <Cell colSpan={3} $bg={BLUE} $right="thick" $title>Fahrer-Info:</Cell>
        <Cell colSpan={3} $bg={GREY} $right="thick" $title>Schichtdaten:</Cell>
        <Cell colSpan={4} $bg={BLUE} $right="thick" $title>Taxameter Daten:</Cell>
      </SheetRow>
      <SheetRow n={5} h={9}>
        <Cell colSpan={3} $bg={BLUE} $right="thick" />
        <Cell colSpan={3} $bg={GREY} $right="thick" />
        <Cell colSpan={4} $bg={BLUE} $right="thick" />
      </SheetRow>
      <SheetRow n={6} h={24}>
        <Cell colSpan={2} rowSpan={2} $bg={BLUE} $bold $align="left" $indent={28}>Fahrer-Nr.</Cell>
        <Cell rowSpan={2} $right="thick">13</Cell>
        <Cell colSpan={2} $bg={GREY} $bold $align="left" $indent={28}>Schichtanfang</Cell>
        <Cell $right="thick">09:00</Cell>
        <Cell colSpan={3} $bg={BLUE} $bold $align="left" $indent={15}>Tages-KM laut Taxameter:</Cell>
        <Cell $right="thick">161,4</Cell>
      </SheetRow>
      <SheetRow n={7} h={24}>
        <Cell colSpan={2} $bg={GREY} $bold $align="left" $indent={28}>Schichtende</Cell>
        <Cell $right="thick">19:30</Cell>
        <Cell colSpan={3} $bg={BLUE} $bold $align="left" $indent={15}>Anzahl der heutigen Touren:</Cell>
        <Cell $right="thick">7</Cell>
      </SheetRow>
      <SheetRow n={8} h={24}>
        <Cell colSpan={2} rowSpan={2} $bg={BLUE} $bottom="thick" $bold $align="left" $indent={28}>Name, Vorname</Cell>
        <Cell rowSpan={2} $right="thick" $bottom="thick">Napp, Jörn</Cell>
        <Cell colSpan={2} $bg={GREY} $bold $align="left" $indent={28}>1. Pause</Cell>
        <Cell $right="thick">10:00-11:00</Cell>
        <Cell colSpan={3} $bg={BLUE} $bold $align="left" $indent={15}>Heutiger Zuschlag:</Cell>
        <Cell $right="thick" $align="right">6,00 €</Cell>
      </SheetRow>
      <SheetRow n={9} h={24}>
        <Cell colSpan={2} $bg={GREY} $bottom="thick" $bold $align="left" $indent={28}>2. Pause</Cell>
        <Cell $right="thick" $bottom="thick">18:00-18:30</Cell>
        <Cell colSpan={3} $bg={BLUE} $bottom="thick" $bold $align="left" $indent={15}>Fahrpreis laut Taxameter:</Cell>
        <Cell $right="thick" $bottom="thick" $align="right">120,40 €</Cell>
      </SheetRow>
      <SheetRow n={10} h={9}>{blanks(10)}</SheetRow>
      <SheetRow n={11} h={38}>
        <Cell colSpan={10} $bg={BLUE} $bottom="thick" $cover="top" $title>Einzelumsätze</Cell>
      </SheetRow>
      <SheetRow n={12} h={25}>
        <Cell $bg={YELLOW} $right="thin" />
        <Cell colSpan={2} $bg={YELLOW} $right="thin" $bold>Fahrstrecke</Cell>
        <Cell colSpan={2} $bg={YELLOW} $right="thin" $bold>7%</Cell>
        <Cell colSpan={2} $bg={YELLOW} $right="thin" $bold>19,00%</Cell>
        <Cell colSpan={3} $bg={ORANGE} $right="thick" $bold>Verrechnung</Cell>
      </SheetRow>
      <SheetRow n={13} h={25}>
        <Cell $bg={YELLOW} $right="thin" $bottom="thin" />
        <Cell $bg={YELLOW} $bottom="thin">von</Cell>
        <Cell $bg={YELLOW} $right="thin" $bottom="thin">nach</Cell>
        <Cell $bg={YELLOW} $bottom="thin">nach Uhr</Cell>
        <Cell $bg={YELLOW} $right="thin" $bottom="thin">ohne Uhr</Cell>
        <Cell $bg={YELLOW} $bottom="thin">nach Uhr</Cell>
        <Cell $bg={YELLOW} $right="thin" $bottom="thin">ohne Uhr</Cell>
        <Cell $bg={ORANGE} $right="dots" $bottom="thin">An:</Cell>
        <Cell $bg={ORANGE} $bottom="thin">Betrag:</Cell>
        <Cell $bg={ORANGE} $right="thick" $bottom="thin">Provision TT</Cell>
      </SheetRow>
      {Array.from({ length: 22 }, (_, i) => {
        const t: Partial<Trip> = trips[i] ?? {};
        return (
          <SheetRow key={i} n={14 + i} h={21}>
            <Cell $v="bottom" $right="thin" $bottom="dots">{i + 1}</Cell>
            <Cell $v="bottom" $right="dots" $bottom="dots" $align="left" $indent={15}>{t.von}</Cell>
            <Cell $v="bottom" $right="thin" $bottom="dots" $align="left" $indent={15}>{t.nach}</Cell>
            <Cell $v="bottom" $right="dots" $bottom="dots" $align="right">{t.d}</Cell>
            <Cell $v="bottom" $right="thin" $bottom="dots" $align="right">{t.e}</Cell>
            <Cell $right="dots" $bottom="dots" />
            <Cell $right="thin" $bottom="dots" />
            <Cell $v="bottom" $bg={ORANGE} $right="dots" $bottom="dots">{t.an}</Cell>
            <Cell $v="bottom" $bg={ORANGE} $right="dots" $bottom="dots" $align={t.right ? "right" : "center"}>{t.betrag}</Cell>
            <Cell $bg={ORANGE} $right="thick" $bottom="dots" />
          </SheetRow>
        );
      })}
    </tbody>
  </Sheet>
);

const RibbonGroup = ({ name, w, launch, off, children }: { name: string; w: number; launch?: boolean; off?: boolean; children: React.ReactNode }) => (
  <Group $w={w} aria-label={name}>
    <GroupBody>{children}</GroupBody>
    <GroupName>
      <GroupLabel>{name}</GroupLabel>
      {launch && (
        <Launcher aria-label={`${name} öffnen`}>
          <LaunchIcon c={off ? "#a5b4c8" : undefined} />
        </Launcher>
      )}
    </GroupName>
  </Group>
);

const OFF = "#a0a6b0";
const top3: [number, number, number][] = [[1, 0, 14], [3, 2, 12], [5, 0, 14], [7, 2, 12]];
const mid3: [number, number, number][] = [[4, 0, 14], [6, 2, 12], [8, 0, 14], [10, 2, 12]];
const low3: [number, number, number][] = [[6, 0, 14], [8, 2, 12], [10, 0, 14], [12, 2, 12]];
const para = (a: number, b: number): [number, number, number][] =>
  [1, 3, 5, 7, 9, 11].map((y, i) => (i % 2 ? [y, a, b] : [y, 0, 14]) as [number, number, number]);

export default function App() {
  return (
    <Page>
      <Global />
      <TopArea>
        <TitleBar>
          <QuickAccess>
            <QuickPill>
              <IconButton aria-label="Speichern"><SaveIcon /></IconButton>
              <IconButton aria-label="Rückgängig"><TurnIcon /></IconButton>
              <Arrow c={OFF} />
              <IconButton aria-label="Wiederholen"><TurnIcon flip /></IconButton>
              <Arrow c={OFF} />
            </QuickPill>
            <IconButton aria-label="Symbolleiste anpassen"><MoreIcon /></IconButton>
          </QuickAccess>
          <WindowTitle>2015-07-16-S0743-F013 - Microsoft Excel</WindowTitle>
          <WindowButtons>
            <WindowButton aria-label="Minimieren"><MinIcon /></WindowButton>
            <WindowButton aria-label="Verkleinern"><RestoreIcon /></WindowButton>
            <WindowButton aria-label="Schließen"><CloseIcon /></WindowButton>
          </WindowButtons>
        </TitleBar>
        <TabBar>
          <RibbonTab $active>Start</RibbonTab>
          {["Einfügen", "Seitenlayout", "Formeln", "Daten", "Überprüfen", "Ansicht"].map((t) => (
            <RibbonTab key={t}>{t}</RibbonTab>
          ))}
          <TabTools>
            <IconButton aria-label="Hilfe"><HelpIcon /></IconButton>
            <IconButton aria-label="Mappe minimieren"><InnerMin /></IconButton>
            <IconButton aria-label="Mappe verkleinern"><InnerRestore /></IconButton>
            <IconButton aria-label="Mappe schließen"><InnerClose /></IconButton>
          </TabTools>
        </TabBar>
        <Orb aria-label="Office"><OrbIcon /></Orb>
      </TopArea>

      <Ribbon>
        <RibbonGroup name="Zwischenablage" w={107} launch>
          <BigButton $w={74}>
            <BigIcon><PasteIcon /></BigIcon>
            <BigCaption>Einfügen</BigCaption>
            <BigCaption><Arrow /></BigCaption>
          </BigButton>
          <Stack>
            <SmallButton aria-label="Ausschneiden"><CutIcon /></SmallButton>
            <SmallButton aria-label="Kopieren"><CopyIcon /></SmallButton>
            <SmallButton aria-label="Format übertragen"><BrushIcon /></SmallButton>
          </Stack>
        </RibbonGroup>

        <RibbonGroup name="Schriftart" w={196} launch off>
          <Rows>
            <Row>
              <Row $gap={0}>
                <Combo $w={98}>
                  <ComboSelect aria-label="Schriftart"><option>Arial</option></ComboSelect>
                  <ComboArrow><Arrow /></ComboArrow>
                </Combo>
                <Combo $w={43}>
                  <ComboSelect aria-label="Schriftgrad"><option>10</option></ComboSelect>
                  <ComboArrow><Arrow /></ComboArrow>
                </Combo>
              </Row>
              <ButtonSet>
                <SetButton $w={22} aria-label="Vergrößern"><Glyph $size={16}>A</Glyph><SizeMark><Mark up /></SizeMark></SetButton>
                <SetButton $w={22} aria-label="Verkleinern"><Glyph $size={13}>A</Glyph><SizeMark><Mark /></SizeMark></SetButton>
              </ButtonSet>
            </Row>
            <Row>
              <ButtonSet>
                <SetButton $w={23}><Glyph $size={14}>F</Glyph></SetButton>
                <SetButton $w={23}><Glyph $size={14} $italic>K</Glyph></SetButton>
                <SetButton $w={31}><Glyph $size={14} $underline>U</Glyph><Arrow c={OFF} /></SetButton>
              </ButtonSet>
              <ButtonSet>
                <SetButton $w={33} aria-label="Rahmen"><BorderIcon /><Arrow c={OFF} /></SetButton>
              </ButtonSet>
              <ButtonSet>
                <SetButton $w={35} aria-label="Füllfarbe"><FillIcon /><Arrow c={OFF} /></SetButton>
                <SetButton $w={30}><Glyph $size={15}>A</Glyph><Arrow c={OFF} /></SetButton>
              </ButtonSet>
            </Row>
          </Rows>
        </RibbonGroup>

        <RibbonGroup name="Ausrichtung" w={165} launch off>
          <Rows>
            <Row>
              <ButtonSet>
                <SetButton $w={22} aria-label="Oben"><LinesIcon rows={top3} /></SetButton>
                <SetButton $w={23} aria-label="Mitte"><LinesIcon rows={mid3} /></SetButton>
                <SetButton $w={22} aria-label="Unten"><LinesIcon rows={low3} /></SetButton>
              </ButtonSet>
              <ButtonSet>
                <SetButton $w={30} aria-label="Orientierung"><RotateIcon /><Arrow c={OFF} /></SetButton>
              </ButtonSet>
            </Row>
            <Row>
              <ButtonSet>
                <SetButton $w={22} aria-label="Linksbündig"><LinesIcon rows={para(0, 9)} /></SetButton>
                <SetButton $w={23} aria-label="Zentriert"><LinesIcon rows={para(2, 12)} /></SetButton>
                <SetButton $w={22} aria-label="Rechtsbündig"><LinesIcon rows={para(5, 14)} /></SetButton>
              </ButtonSet>
              <ButtonSet>
                <SetButton $w={22} aria-label="Einzug verkleinern"><IndentIcon /></SetButton>
                <SetButton $w={21} aria-label="Einzug vergrößern"><IndentIcon right /></SetButton>
              </ButtonSet>
            </Row>
          </Rows>
          <Divider />
          <Rows>
            <PlainButton aria-label="Zeilenumbruch"><WrapIcon /></PlainButton>
            <PlainButton aria-label="Verbinden"><MergeIcon /><Arrow c={OFF} /></PlainButton>
          </Rows>
        </RibbonGroup>

        <RibbonGroup name="Zahl" w={136} launch off>
          <Rows>
            <Row>
              <Combo $w={128} $off>
                <ComboSelect aria-label="Zahlenformat" disabled><option></option></ComboSelect>
                <ComboArrow><Arrow c={OFF} /></ComboArrow>
              </Combo>
            </Row>
            <Row>
              <ButtonSet>
                <SetButton $w={33} aria-label="Währung"><MoneyIcon /><Arrow /></SetButton>
                <SetButton $w={22} $size={13}>%</SetButton>
                <SetButton $w={23} $size={10}>000</SetButton>
              </ButtonSet>
              <ButtonSet>
                <SetButton $w={21} aria-label="Dezimalstelle hinzufügen"><DecimalIcon /></SetButton>
                <SetButton $w={21} aria-label="Dezimalstelle löschen"><DecimalIcon less /></SetButton>
              </ButtonSet>
            </Row>
          </Rows>
        </RibbonGroup>

        <RibbonGroup name="Formatvorlagen" w={279}>
          <BigButton $w={82} $off>
            <BigIcon><TableIcon kind="cond" /></BigIcon>
            <BigCaption>Bedingte</BigCaption>
            <BigCaption>Formatierung <Arrow c={OFF} /></BigCaption>
          </BigButton>
          <BigButton $w={74} $off>
            <BigIcon><TableIcon kind="table" /></BigIcon>
            <BigCaption>Als Tabelle</BigCaption>
            <BigCaption>formatieren <Arrow c={OFF} /></BigCaption>
          </BigButton>
          <BigButton $w={114} $off>
            <BigIcon><TableIcon kind="cell" /></BigIcon>
            <BigCaption>Zellenformatvorlagen</BigCaption>
            <BigCaption><Arrow c={OFF} /></BigCaption>
          </BigButton>
        </RibbonGroup>

        <RibbonGroup name="Zellen" w={91}>
          <Stack $left={3}>
            <SmallButton $off><CellsIcon kind="insert" />Einfügen <Arrow /></SmallButton>
            <SmallButton $off><CellsIcon kind="delete" />Löschen <Arrow /></SmallButton>
            <SmallButton><CellsIcon kind="format" />Format <Arrow /></SmallButton>
          </Stack>
        </RibbonGroup>

        <RibbonGroup name="Bearbeiten" w={180}>
          <Stack $left={4}>
            <SmallButton aria-label="Summe"><SigmaIcon /><Arrow /></SmallButton>
            <SmallButton aria-label="Füllbereich"><FillDownIcon /><Arrow /></SmallButton>
            <SmallButton aria-label="Löschen"><EraserIcon /><Arrow /></SmallButton>
          </Stack>
          <BigButton $w={77} $off>
            <BigIcon><SortIcon /></BigIcon>
            <BigCaption>Sortieren</BigCaption>
            <BigCaption>und Filtern <Arrow c={OFF} /></BigCaption>
          </BigButton>
          <BigButton $w={64}>
            <BigIcon><FindIcon /></BigIcon>
            <BigCaption>Suchen und</BigCaption>
            <BigCaption>Auswählen <Arrow /></BigCaption>
          </BigButton>
        </RibbonGroup>
      </Ribbon>

      <FormulaBar>
        <NameField aria-label="Namenfeld" defaultValue="J59" />
        <NameArrow aria-label="Namen anzeigen"><Arrow c="#000" w={7} /></NameArrow>
        <FormulaTools>
          <Knob />
          <FxButton>fx</FxButton>
        </FormulaTools>
        <FormulaField aria-label="Bearbeitungsleiste" />
        <ExpandButton aria-label="Leiste erweitern"><ChevronsIcon /></ExpandButton>
      </FormulaBar>
      <Strip />

      <SheetArea>
        <Viewport>
          <Worksheet />
        </Viewport>
        <VScroll>
          <SplitTop />
          <ScrollButton aria-label="Nach oben"><UpDownIcon up /></ScrollButton>
          <VTrack>
            <VThumb><Grip vertical /></VThumb>
          </VTrack>
          <ScrollButton aria-label="Nach unten"><UpDownIcon /></ScrollButton>
        </VScroll>
        <Edge />
      </SheetArea>

      <BottomBar>
        <NavSet>
          <NavButton aria-label="Erstes Blatt"><EndArrow left /></NavButton>
          <NavButton aria-label="Voriges Blatt"><SideArrow left c="#15428b" /></NavButton>
          <NavButton aria-label="Nächstes Blatt"><SideArrow c="#15428b" /></NavButton>
          <NavButton aria-label="Letztes Blatt"><EndArrow /></NavButton>
        </NavSet>
        <SheetTabs>
          <SheetTab $w={66} $active>Tabelle1</SheetTab>
          <SheetTab $w={66}>Tabelle2</SheetTab>
          <SheetTab $w={66}>Tabelle3</SheetTab>
          <SheetTab $w={33} aria-label="Neues Blatt"><NewSheetIcon /></SheetTab>
        </SheetTabs>
        <HScroll>
          <SplitSide />
          <HButton aria-label="Nach links"><SideArrow left /></HButton>
          <HTrack>
            <HThumb><Grip /></HThumb>
          </HTrack>
          <HButton aria-label="Nach rechts"><SideArrow /></HButton>
          <SplitSide />
        </HScroll>
        <BottomEnd />
      </BottomBar>

      <StatusBar>
        <StatusText>Bereit</StatusText>
        <StatusTools>
          <ViewSet>
            <ViewButton $on aria-label="Normal"><ViewIcon kind={0} /></ViewButton>
            <ViewButton aria-label="Seitenlayout"><ViewIcon kind={1} /></ViewButton>
            <ViewButton aria-label="Umbruchvorschau"><ViewIcon kind={2} /></ViewButton>
          </ViewSet>
          <ZoomLevel>105 %</ZoomLevel>
          <ZoomSet>
            <IconButton aria-label="Kleiner"><ZoomSign /></IconButton>
            <Zoom type="range" aria-label="Zoom" min={0} max={200} defaultValue={102} />
            <IconButton aria-label="Größer"><ZoomSign plus /></IconButton>
          </ZoomSet>
        </StatusTools>
      </StatusBar>

      <Taskbar>
        <StartButton aria-label="Start"><WindowsIcon /></StartButton>
        <Search aria-label="Suche" placeholder="Windows durchsuchen" />
        <TaskButton aria-label="Taskansicht"><TaskViewIcon /></TaskButton>
        <TaskButton aria-label="Edge"><EdgeIcon /></TaskButton>
        <TaskButton aria-label="Explorer"><FolderIcon /></TaskButton>
        <TaskButton aria-label="Firefox" $open><FirefoxIcon /></TaskButton>
        <TaskButton aria-label="WordPad"><WordPadIcon /></TaskButton>
        <TaskButton aria-label="Photoshop"><PsIcon /></TaskButton>
        <TaskButton aria-label="Word"><WordIcon /></TaskButton>
        <TaskButton aria-label="Dokument"><PageIcon /></TaskButton>
        <TaskButton aria-label="Excel" $open $front><ExcelIcon /></TaskButton>
        <Tray>
          <HelpRound />
          <ChevronUp />
          <AviraIcon />
          <NetIcon />
          <VolumeIcon />
          <Clock>10:03<br />21.10.2016</Clock>
          <NoteIcon />
          <ShowDesktop aria-label="Desktop anzeigen" />
        </Tray>
      </Taskbar>
    </Page>
  );
}
